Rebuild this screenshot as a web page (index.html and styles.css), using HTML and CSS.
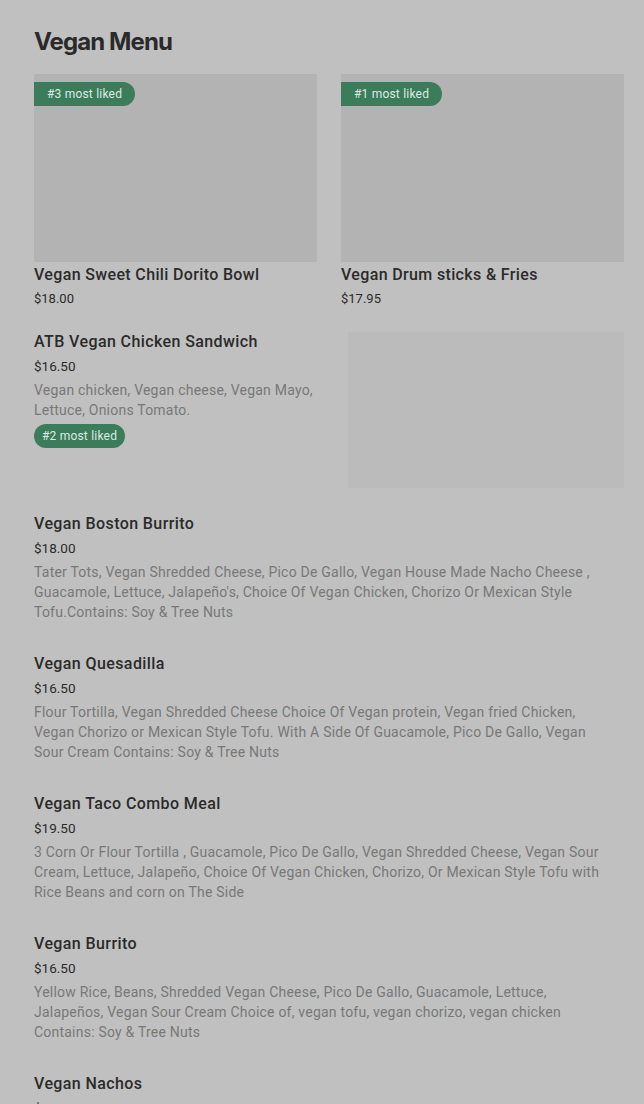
FILE: index.html
```html
<!DOCTYPE html>
<html lang="en">
<head>
    <meta charset="UTF-8">
    <meta name="viewport" content="width=device-width, initial-scale=1.0">
    <title>Vegan Menu</title>
    <link rel="stylesheet" href="styles.css">
</head>
<body>
    <div class="menu">
        <h1 class="menu-title">Vegan Menu</h1>

        <div class="featured">
            <div class="card">
                <div class="card-img">
                    <span class="badge badge-flag">#3 most liked</span>
                </div>
                <div class="card-name">Vegan Sweet Chili Dorito Bowl</div>
                <div class="card-price">$18.00</div>
            </div>
            <div class="card">
                <div class="card-img">
                    <span class="badge badge-flag">#1 most liked</span>
                </div>
                <div class="card-name">Vegan Drum sticks &amp; Fries</div>
                <div class="card-price">$17.95</div>
            </div>
        </div>

        <div class="item item-with-img">
            <div class="item-body">
                <div class="item-name">ATB Vegan Chicken Sandwich</div>
                <div class="item-price">$16.50</div>
                <div class="item-desc">Vegan chicken, Vegan cheese, Vegan Mayo, Lettuce, Onions Tomato.</div>
                <span class="badge badge-pill">#2 most liked</span>
            </div>
            <div class="item-img"></div>
        </div>

        <div class="item">
            <div class="item-name">Vegan Boston Burrito</div>
            <div class="item-price">$18.00</div>
            <div class="item-desc">Tater Tots, Vegan Shredded Cheese, Pico De Gallo, Vegan House Made Nacho Cheese , Guacamole, Lettuce, Jalapeño's, Choice Of Vegan Chicken, Chorizo Or Mexican Style Tofu.Contains: Soy &amp; Tree Nuts</div>
        </div>

        <div class="item">
            <div class="item-name">Vegan Quesadilla</div>
            <div class="item-price">$16.50</div>
            <div class="item-desc">Flour Tortilla, Vegan Shredded Cheese Choice Of Vegan protein, Vegan fried Chicken, Vegan Chorizo or Mexican Style Tofu. With A Side Of Guacamole, Pico De Gallo, Vegan Sour Cream Contains: Soy &amp; Tree Nuts</div>
        </div>

        <div class="item">
            <div class="item-name">Vegan Taco Combo Meal</div>
            <div class="item-price">$19.50</div>
            <div class="item-desc">3 Corn Or Flour Tortilla , Guacamole, Pico De Gallo, Vegan Shredded Cheese, Vegan Sour Cream, Lettuce, Jalapeño, Choice Of Vegan Chicken, Chorizo, Or Mexican Style Tofu with Rice Beans and corn on The Side</div>
        </div>

        <div class="item">
            <div class="item-name">Vegan Burrito</div>
            <div class="item-price">$16.50</div>
            <div class="item-desc">Yellow Rice, Beans, Shredded Vegan Cheese, Pico De Gallo, Guacamole, Lettuce, Jalapeños, Vegan Sour Cream Choice of, vegan tofu, vegan chorizo, vegan chicken Contains: Soy &amp; Tree Nuts</div>
        </div>

        <div class="item">
            <div class="item-name">Vegan Nachos</div>
            <div class="item-price">$16.50</div>
            <div class="item-desc">Tortilla Chips, Vegan House Made Nacho Cheese, Pico De Gallo, Guacamole, Jalapeños</div>
        </div>
    </div>
</body>
</html>
```

FILE: styles.css
```css
body {
    margin: 0;
    background-color: #c0c0c0;
    font-family: Roboto, "Liberation Sans", Arial, sans-serif;
    color: #2b2b2b;
}
.menu {
    padding: 28px 20px 0 34px;
}
.menu-title {
    margin: 0;
    font-family: Inter, Roboto, sans-serif;
    font-size: 24px;
    line-height: 28px;
    font-weight: 700;
    letter-spacing: -0.9px;
    color: #2a2a2a;
}
.featured {
    display: grid;
    grid-template-columns: 1fr 1fr;
    gap: 24px;
    margin-top: 18px;
}
.card-img {
    height: 188px;
    background-color: #b3b3b3;
    position: relative;
}
.badge {
    display: inline-block;
    background-color: #3b7d5a;
    color: #dde9e2;
    font-size: 12px;
    line-height: 24px;
    height: 24px;
    letter-spacing: 0.2px;
}
.badge-flag {
    position: absolute;
    top: 8px;
    left: 0;
    padding: 0 13px;
    border-radius: 0 12px 12px 0;
}
.badge-pill {
    padding: 0 8px;
    border-radius: 12px;
    margin-top: 4px;
}
.card-name {
    margin-top: 2px;
    font-size: 16px;
    line-height: 22px;
    font-weight: 500;
    letter-spacing: 0.35px;
}
.card-price {
    margin-top: 4px;
    font-size: 13px;
    line-height: 18px;
}
.item {
    margin-top: 32px;
}
.item-with-img {
    display: flex;
    gap: 34px;
    margin-top: 24px;
}
.item-with-img + .item {
    margin-top: 26px;
}
.item-body {
    flex: 1;
}
.item-img {
    width: 276px;
    height: 156px;
    flex-shrink: 0;
    background-color: #bbbbbb;
}
.item-name {
    font-size: 16px;
    line-height: 20px;
    font-weight: 500;
    letter-spacing: 0.4px;
}
.item-price {
    margin-top: 4px;
    font-size: 13.5px;
    line-height: 20px;
}
.item-desc {
    margin-top: 4px;
    padding-right: 6px;
    font-size: 14px;
    line-height: 20px;
    letter-spacing: 0.22px;
    color: #787878;
}
.item-with-img .item-desc {
    padding-right: 0;
}
```
